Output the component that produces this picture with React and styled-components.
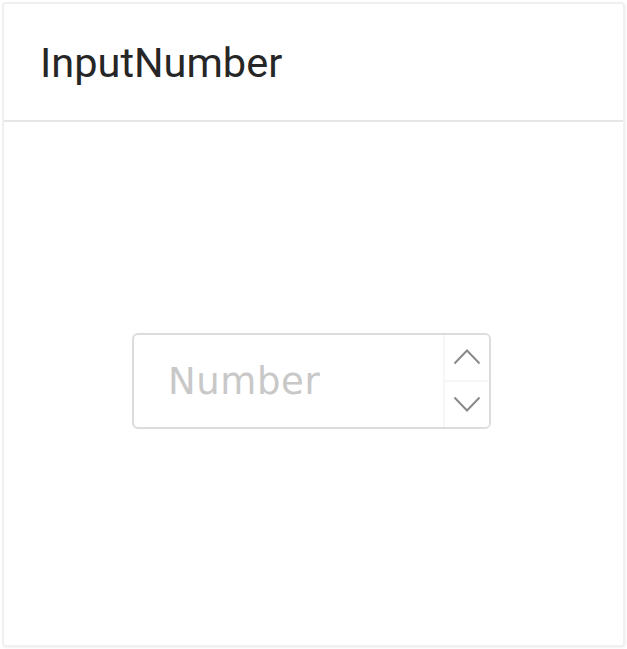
import React, { useState } from 'react'
import styled, { createGlobalStyle } from 'styled-components'

const Global = createGlobalStyle`
  html, body {
    margin: 0;
    padding: 0;
    background: #fff;
  }
  * { box-sizing: border-box; }
`

const Page = styled.div`
  padding: 2px;
  width: 627px;
  height: 649px;
`

const Card = styled.div`
  display: flex;
  flex-direction: column;
  width: 623px;
  height: 645px;
  border: 2px solid #f0f0f0;
  border-radius: 4px;
  box-shadow: 1px 1px 2px rgba(0, 0, 0, 0.06);
  background: #fff;
`

const Header = styled.div`
  display: flex;
  align-items: center;
  height: 118px;
  padding-left: 36px;
  border-bottom: 2px solid #e6e6e6;
  font-family: Roboto, "Noto Sans", sans-serif;
  font-size: 41.5px;
  color: #262626;
`

const Body = styled.div`
  flex: 1;
  display: flex;
  align-items: center;
  justify-content: center;
  padding-bottom: 6px;
  padding-right: 4px;
`

const NumberBox = styled.div`
  display: flex;
  width: 359px;
  height: 96px;
  border: 2px solid #dcdcdc;
  border-radius: 6px;
  overflow: hidden;
`

const Field = styled.input`
  flex: 1;
  min-width: 0;
  border: none;
  outline: none;
  padding: 2px 0 0 34px;
  font-family: "DejaVu Sans", Verdana, sans-serif;
  font-size: 37px;
  letter-spacing: 0.6px;
  color: #444;
  background: transparent;
  &::placeholder { color: #c8c8c8; }
`

const Handlers = styled.div`
  display: flex;
  flex-direction: column;
  width: 46px;
  border-left: 2px solid #f6f6f6;
`

const Step = styled.button`
  flex: 1;
  display: flex;
  align-items: center;
  justify-content: center;
  padding: 0;
  border: none;
  border-top: ${p => p.down ? '2px solid #f6f6f6' : 'none'};
  background: #fff;
  color: #8a8a8a;
  cursor: pointer;
`

const Chevron = ({ down }) => (
  <svg width="28" height="18" viewBox="0 0 28 18" fill="none">
    <path
      d={down ? 'M1.5 2.5 L14 15.5 L26.5 2.5' : 'M1.5 15.5 L14 2.5 L26.5 15.5'}
      stroke="currentColor"
      strokeWidth="2"
    />
  </svg>
)

export default function App() {
  const [value, setValue] = useState('')

  const bump = (d) => {
    const n = Number(value) || 0
    setValue(String(n + d))
  }

  return (
    <Page>
      <Global />
      <Card>
        <Header>InputNumber</Header>
        <Body>
          <NumberBox>
            <Field
              value={value}
              onChange={(e) => setValue(e.target.value)}
              placeholder="Number"
            />
            <Handlers>
              <Step onClick={() => bump(1)}><Chevron /></Step>
              <Step down onClick={() => bump(-1)}><Chevron down /></Step>
            </Handlers>
          </NumberBox>
        </Body>
      </Card>
    </Page>
  )
}
